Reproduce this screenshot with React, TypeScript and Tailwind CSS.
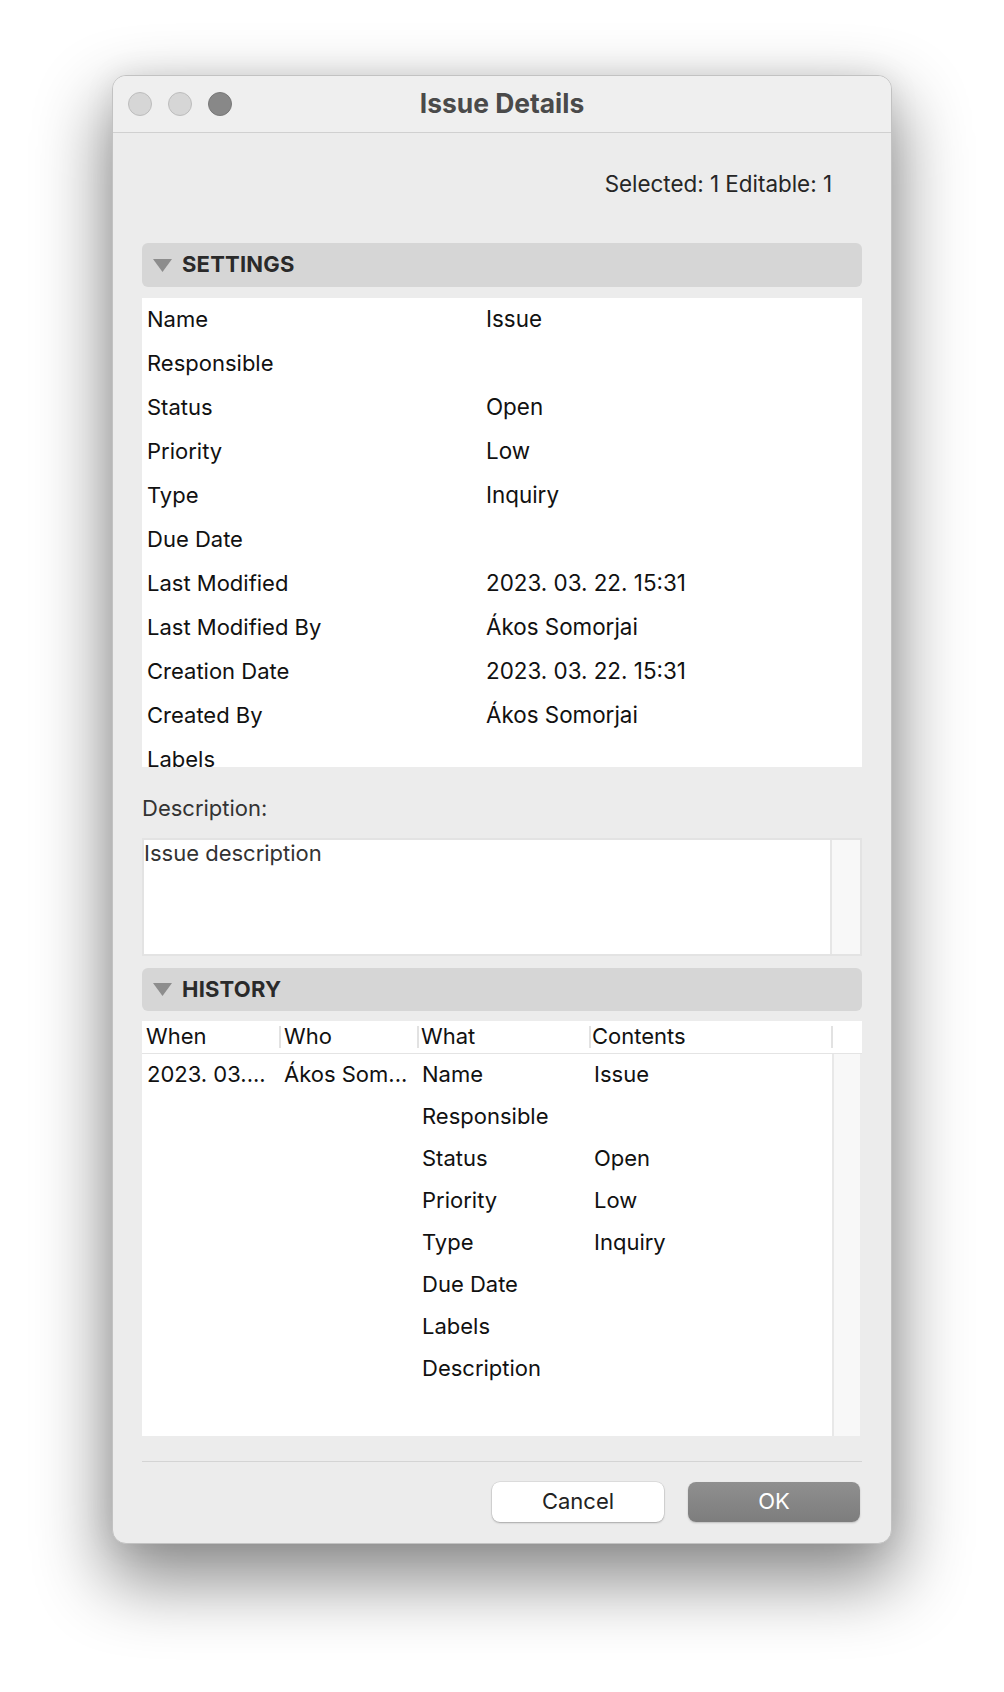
import React from "react";

const settings: [string, string][] = [
  ["Name", "Issue"],
  ["Responsible", ""],
  ["Status", "Open"],
  ["Priority", "Low"],
  ["Type", "Inquiry"],
  ["Due Date", ""],
  ["Last Modified", "2023. 03. 22. 15:31"],
  ["Last Modified By", "Ákos Somorjai"],
  ["Creation Date", "2023. 03. 22. 15:31"],
  ["Created By", "Ákos Somorjai"],
  ["Labels", ""],
];

const history: [string, string, string, string][] = [
  ["2023. 03....", "Ákos Som...", "Name", "Issue"],
  ["", "", "Responsible", ""],
  ["", "", "Status", "Open"],
  ["", "", "Priority", "Low"],
  ["", "", "Type", "Inquiry"],
  ["", "", "Due Date", ""],
  ["", "", "Labels", ""],
  ["", "", "Description", ""],
];

function SectionHeader({ title }: { title: string }) {
  return (
    <div className="flex items-center h-full rounded-[6px] bg-[#d6d6d6]">
      <svg width="19" height="13" viewBox="0 0 19 13" className="ml-[11px]">
        <polygon points="0,0 19,0 9.5,13" fill="#8d8d8d" />
      </svg>
      <span className="ml-[10px] pb-[2px] text-[22px] font-bold tracking-[0.2px] text-[#2a2a2a] leading-[26px]">
        {title}
      </span>
    </div>
  );
}

function Divider() {
  return <div className="w-[2px] h-[22px] bg-[#e2e2e2] shrink-0" />;
}

export default function App() {
  return (
    <div
      className="w-[1004px] h-[1692px] bg-white pt-[75px] pl-[112px]"
      style={{ fontFamily: "Inter, 'Noto Sans', sans-serif" }}
    >
      <div className="w-[780px] h-[1469px] rounded-[14px] bg-[#ececec] border border-[#c2c2c2] overflow-hidden flex flex-col shadow-[0_32px_70px_6px_rgba(0,0,0,0.45),0_0_30px_rgba(0,0,0,0.08)]">
        {/* Title bar */}
        <div className="relative h-[57px] shrink-0 bg-[#efefef] border-b border-[#d0d0d0] flex items-center justify-center">
          <div className="absolute left-[15px] top-[16px] flex gap-[16px]">
            <div className="w-[24px] h-[24px] rounded-full bg-[#d6d6d6] border border-[#bdbdbd]" />
            <div className="w-[24px] h-[24px] rounded-full bg-[#d6d6d6] border border-[#bdbdbd]" />
            <div className="w-[24px] h-[24px] rounded-full bg-[#888888] border border-[#787878]" />
          </div>
          <span className="pb-[3px] text-[26.4px] font-bold text-[#4a4a4a] leading-[30px]">Issue Details</span>
        </div>

        <div className="px-[29px] flex flex-col flex-1">
          {/* Selected */}
          <div className="h-[110px] shrink-0 pt-[38px] pr-[30px] text-right text-[22.4px] leading-[26px] text-[#262626]">
            Selected: 1 Editable: 1
          </div>

          {/* Settings */}
          <div className="h-[44px] shrink-0">
            <SectionHeader title="SETTINGS" />
          </div>
          <div className="mt-[11px] h-[469px] shrink-0 bg-white overflow-hidden">
            {settings.map(([k, v]) => (
              <div key={k} className="h-[44px] flex items-center pl-[5px] pb-[3px] text-[22px] leading-[26px] text-[#111]">
                <div className="w-[339px]">{k}</div>
                <div className="text-[22.4px]">{v}</div>
              </div>
            ))}
          </div>

          {/* Description */}
          <div className="h-[71px] shrink-0 pt-[28px] text-[22px] leading-[26px] text-[#333]">Description:</div>
          <div className="h-[118px] shrink-0 border-2 border-[#e3e3e3] bg-white flex">
            <div className="flex-1 text-[22px] leading-[26px] text-[#333]">Issue description</div>
            <div className="w-[2px] bg-[#e6e6e6]" />
            <div className="w-[28px] bg-[#f8f8f8]" />
          </div>

          {/* History */}
          <div className="mt-[12px] h-[43px] shrink-0">
            <SectionHeader title="HISTORY" />
          </div>
          <div className="mt-[10px] shrink-0 bg-white h-[33px] border-b border-[#e4e4e4] flex items-center text-[22px] leading-[26px] text-[#111]">
            <div className="w-[137px] pl-[4px] pb-[3px] shrink-0">When</div>
            <Divider />
            <div className="w-[136px] pl-[3px] pb-[3px] shrink-0">Who</div>
            <Divider />
            <div className="w-[170px] pl-[2px] pb-[3px] shrink-0">What</div>
            <Divider />
            <div className="w-[240px] pl-[1px] pb-[3px] shrink-0">Contents</div>
            <Divider />
          </div>
          <div className="h-[382px] shrink-0 flex mr-[2px]">
            <div className="flex-1 bg-white">
              {history.map((r, i) => (
                <div key={i} className="h-[42px] flex items-center pb-[3px] text-[22px] leading-[26px] text-[#111]">
                  <div className="w-[142px] pl-[5px] shrink-0 whitespace-nowrap">{r[0]}</div>
                  <div className="w-[138px] shrink-0 whitespace-nowrap">{r[1]}</div>
                  <div className="w-[172px] shrink-0">{r[2]}</div>
                  <div>{r[3]}</div>
                </div>
              ))}
            </div>
            <div className="w-[2px] bg-[#e8e8e8]" />
            <div className="w-[26px] bg-[#f8f8f8]" />
          </div>

          {/* Separator */}
          <div className="mt-[25px] h-px bg-[#d4d4d4] shrink-0" />

          {/* Buttons */}
          <div className="mt-[20px] flex justify-end gap-[24px] pr-[2px]">
            <button className="w-[172px] h-[40px] pb-[2px] rounded-[8px] bg-white text-[22px] text-[#222] shadow-[0_1px_2px_rgba(0,0,0,0.25),0_0_0_0.5px_rgba(0,0,0,0.12)]">
              Cancel
            </button>
            <button className="w-[172px] h-[40px] pb-[2px] rounded-[8px] bg-gradient-to-b from-[#8f8f8f] to-[#7d7d7d] text-[22px] text-white shadow-[0_1px_2px_rgba(0,0,0,0.2)]">
              OK
            </button>
          </div>
        </div>
      </div>
    </div>
  );
}
